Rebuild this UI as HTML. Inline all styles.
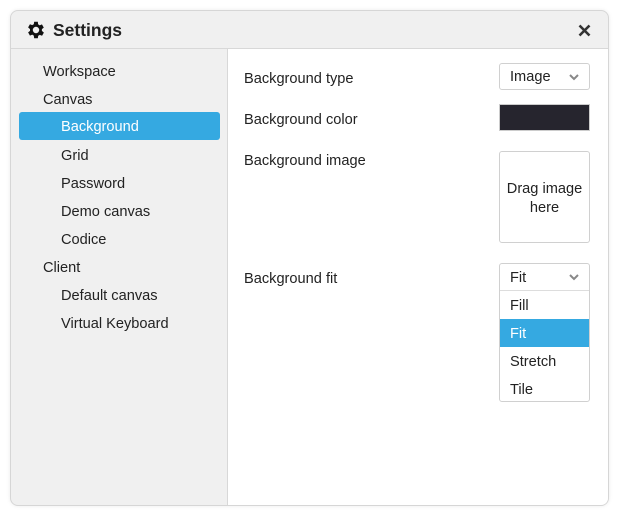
<!DOCTYPE html><html><head><style>
body{margin:0;width:618px;height:514px;background:#fff;font-family:"Liberation Sans",sans-serif;color:#222;position:relative;overflow:hidden}
.win{position:absolute;left:10px;top:10px;width:597px;height:494px;border:1px solid #d6d6d6;border-radius:8px;background:#f0f0f0;box-shadow:0 0 4px rgba(0,0,0,.08);overflow:hidden}
.hdr{position:absolute;left:0;top:0;right:0;height:37px;border-bottom:1px solid #d8d8d8}
.title{position:absolute;left:42px;top:9px;font-size:17.5px;font-weight:bold;color:#222}
.side{position:absolute;left:0;top:38px;width:216px;bottom:0;border-right:1px solid #d8d8d8}
.main{position:absolute;left:217px;top:38px;right:0;bottom:0;background:#fff}
.it{position:absolute;font-size:14.6px;height:28px;line-height:30px}
.lbl{position:absolute;left:16px;font-size:14.6px}
.box{position:absolute;border:1px solid #d0d0d0;border-radius:3px;background:#fff;box-sizing:border-box}
.chev{position:absolute;right:10px;top:9px}
.opt{position:absolute;left:0;right:0;height:28px;line-height:30px;padding-left:10px;font-size:14.6px}
</style></head><body>
<div class="win">
<div class="hdr">
<svg style="position:absolute;left:14px;top:8px" width="22" height="22" viewBox="0 0 24 24"><path fill="#111" d="M19.4 13a7.6 7.6 0 0 0 0-2l2.1-1.6-2-3.5-2.5 1a7.4 7.4 0 0 0-1.7-1L15 3h-4l-.4 2.7a7.4 7.4 0 0 0-1.7 1l-2.5-1-2 3.5L6.5 11a7.6 7.6 0 0 0 0 2l-2.1 1.6 2 3.5 2.5-1a7.4 7.4 0 0 0 1.7 1L11 21h4l.4-2.7a7.4 7.4 0 0 0 1.7-1l2.5 1 2-3.5zM13 15.5a3.5 3.5 0 1 1 0-7 3.5 3.5 0 0 1 0 7z" transform="translate(-1 0)"/></svg>
<div class="title">Settings</div>
<svg style="position:absolute;left:567px;top:13px" width="13" height="13" viewBox="0 0 13 13"><path d="M1.5 1.5l10 10M11.5 1.5l-10 10" stroke="#333" stroke-width="2.6"/></svg>
</div>
<div class="side">
<div class="it" style="left:32px;top:8px">Workspace</div>
<div class="it" style="left:32px;top:36px">Canvas</div>
<div class="it" style="left:8px;top:63px;width:201px;background:#35a9e1;color:#fff;border-radius:3px;padding-left:42px;box-sizing:border-box">Background</div>
<div class="it" style="left:50px;top:92px">Grid</div>
<div class="it" style="left:50px;top:120px">Password</div>
<div class="it" style="left:50px;top:148px">Demo canvas</div>
<div class="it" style="left:50px;top:176px">Codice</div>
<div class="it" style="left:32px;top:204px">Client</div>
<div class="it" style="left:50px;top:232px">Default canvas</div>
<div class="it" style="left:50px;top:260px">Virtual Keyboard</div>
</div>
<div class="main">
<div class="lbl" style="top:22px">Background type</div>
<div class="lbl" style="top:63px">Background color</div>
<div class="lbl" style="top:104px">Background image</div>
<div class="lbl" style="top:222px">Background fit</div>
<div class="box" style="left:271px;top:14px;width:91px;height:27px;font-size:14.6px;line-height:27px;padding-left:10px">Image<svg class="chev" width="10" height="8" viewBox="0 0 10 8"><path d="M1 2l4 4 4-4" stroke="#888" stroke-width="2" fill="none"/></svg></div>
<div style="position:absolute;left:271px;top:55px;width:91px;height:27px;background:#26252e;border:1px solid #ccc;box-sizing:border-box"></div>
<div class="box" style="left:271px;top:102px;width:91px;height:92px;text-align:center;font-size:14.6px;padding-top:28px;line-height:19px">Drag image<br>here</div>
<div class="box" style="left:271px;top:214px;width:91px;height:139px;overflow:hidden">
<div class="opt" style="top:0;height:26px;line-height:28px;border-bottom:1px solid #ddd">Fit<svg class="chev" width="10" height="8" viewBox="0 0 10 8"><path d="M1 2l4 4 4-4" stroke="#888" stroke-width="2" fill="none"/></svg></div>
<div class="opt" style="top:27px">Fill</div>
<div class="opt" style="top:55px;background:#35a9e1;color:#fff">Fit</div>
<div class="opt" style="top:83px">Stretch</div>
<div class="opt" style="top:111px">Tile</div>
</div>
</div>
</div>
</body></html>
